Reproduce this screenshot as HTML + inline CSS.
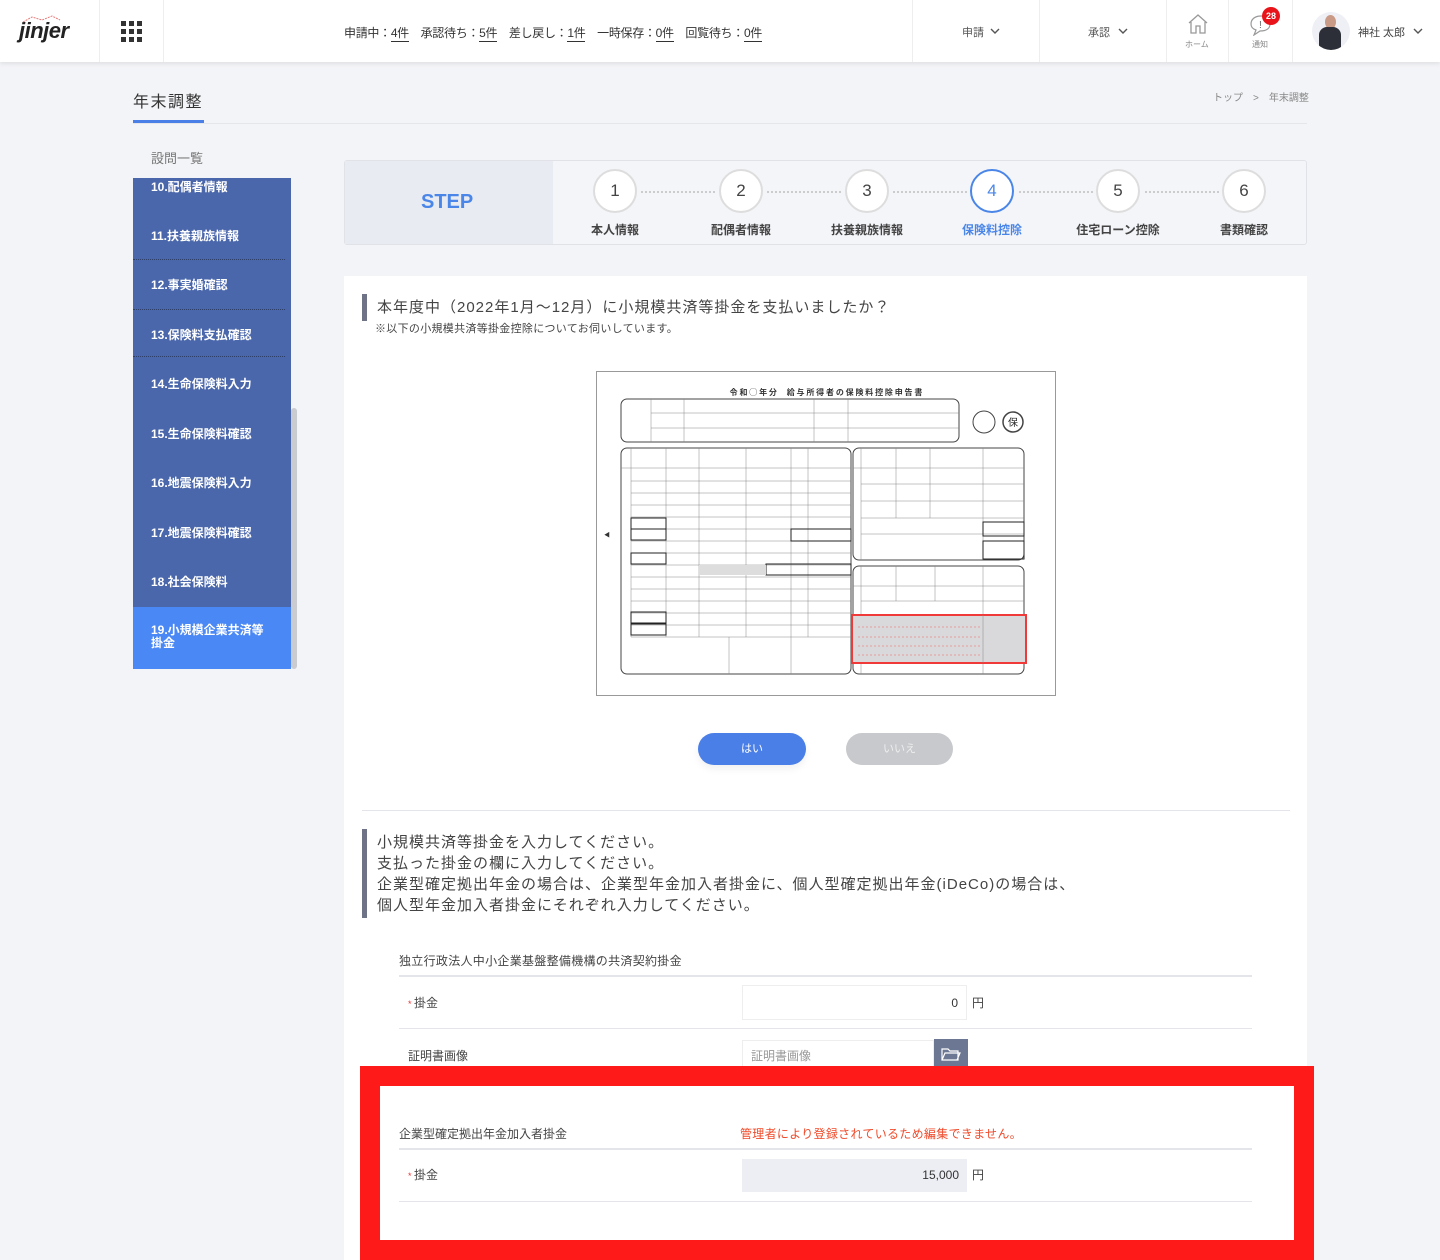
<!DOCTYPE html>
<html><head><meta charset="utf-8">
<style>
*{box-sizing:border-box;margin:0;padding:0}
html,body{width:1440px;height:1260px;overflow:hidden}
body{background:#f3f4f7;font-family:"Liberation Sans","Noto Sans CJK JP",sans-serif;color:#333;position:relative}
.abs{position:absolute}
.hdr{left:0;top:0;width:1440px;height:62px;background:#fff;box-shadow:0 2px 4px rgba(0,0,0,.08)}
.vs{position:absolute;top:0;width:1px;height:62px;background:#eee}
.cnt{font-size:12px;color:#333;top:24px;white-space:nowrap;letter-spacing:-0.3px}
.cnt u{text-decoration:none;border-bottom:1px solid #333;padding-bottom:1px}
.menu{font-size:11px;color:#555;top:24px}
.side{left:133px;top:178px;width:158px;height:491px;background:#4a67ab}
.si{position:absolute;left:0;width:158px;color:#fff;font-size:12px;font-weight:bold;padding-left:18px}
.dot{position:absolute;left:0;width:152px;border-top:1px dotted #2e3f6a}
.card{left:344px;top:276px;width:963px;height:984px;background:#fff}
.circ{position:absolute;top:169px;width:44px;height:44px;border-radius:50%;background:#fff;border:2px solid #ddd;text-align:center;line-height:40px;font-size:17px;color:#444}
.sl{position:absolute;top:221px;font-size:12px;font-weight:bold;color:#444;width:110px;text-align:center}
.dots{position:absolute;top:191px;height:0;border-top:2px dotted #ccc}
.q{font-size:15px;color:#444;letter-spacing:1px}
.hl{height:1px;background:#e3e5ea}
.lbl{font-size:12px;color:#444}
</style></head><body>
<div class="abs hdr">
  <div class="abs" style="left:19px;top:18px;font-size:22px;font-weight:bold;font-style:italic;color:#222;letter-spacing:-0.5px">jinjer</div>
  <svg class="abs" style="left:22px;top:14px" width="40" height="10"><polyline points="1,8 10,3 20,6 30,2 38,6" fill="none" stroke="#e87878" stroke-width="1" stroke-dasharray="2,1"/></svg>
  <div class="vs" style="left:99px"></div>
  <svg class="abs" style="left:121px;top:21px" width="22" height="22"><g fill="#333"><rect x="0" y="0" width="5" height="5"/><rect x="8" y="0" width="5" height="5"/><rect x="16" y="0" width="5" height="5"/><rect x="0" y="8" width="5" height="5"/><rect x="8" y="8" width="5" height="5"/><rect x="16" y="8" width="5" height="5"/><rect x="0" y="16" width="5" height="5"/><rect x="8" y="16" width="5" height="5"/><rect x="16" y="16" width="5" height="5"/></g></svg>
  <div class="vs" style="left:163px"></div>
  <div class="abs cnt" style="left:344px">申請中：<u>4件</u>　承認待ち：<u>5件</u>　差し戻し：<u>1件</u>　一時保存：<u>0件</u>　回覧待ち：<u>0件</u></div>
  <div class="vs" style="left:912px"></div>
  <div class="abs menu" style="left:962px">申請</div>
  <svg class="abs" style="left:990px;top:28px" width="10" height="6"><path d="M1 1 L5 5 L9 1" fill="none" stroke="#555" stroke-width="1.4"/></svg>
  <div class="vs" style="left:1039px"></div>
  <div class="abs menu" style="left:1088px">承認</div>
  <svg class="abs" style="left:1118px;top:28px" width="10" height="6"><path d="M1 1 L5 5 L9 1" fill="none" stroke="#555" stroke-width="1.4"/></svg>
  <div class="vs" style="left:1166px"></div>
  <svg class="abs" style="left:1187px;top:13px" width="22" height="22"><path d="M2 10 L11 2 L20 10 M4 9 V20 H9 V13 H13 V20 H18 V9" fill="none" stroke="#999" stroke-width="1.3"/></svg>
  <div class="abs" style="left:1185px;top:39px;font-size:8px;color:#888">ホーム</div>
  <div class="vs" style="left:1228px"></div>
  <svg class="abs" style="left:1249px;top:14px" width="24" height="22"><path d="M12 2 C5 2 2 6 2 10 C2 13 4 15 7 16 L5 21 L11 17 C18 17 21 14 21 10 C21 6 18 2 12 2Z" fill="none" stroke="#999" stroke-width="1.2"/><text x="10" y="14" font-size="10" fill="#666" font-family="Liberation Sans">!</text></svg>
  <div class="abs" style="left:1262px;top:7px;width:18px;height:18px;border-radius:50%;background:#e8141a;color:#fff;font-size:9px;font-weight:bold;text-align:center;line-height:18px">28</div>
  <div class="abs" style="left:1252px;top:39px;font-size:8px;color:#888">通知</div>
  <div class="vs" style="left:1292px"></div>
  <div class="abs" style="left:1312px;top:12px;width:38px;height:38px;border-radius:50%;background:#eef0f5;overflow:hidden"><div style="position:absolute;left:13px;top:3px;width:11px;height:14px;border-radius:50%;background:#c99a86"></div><div style="position:absolute;left:7px;top:15px;width:22px;height:26px;border-radius:8px 8px 0 0;background:#2c2f38"></div></div>
  <div class="abs" style="left:1358px;top:24px;font-size:11px;color:#444">神社 太郎</div>
  <svg class="abs" style="left:1413px;top:28px" width="10" height="6"><path d="M1 1 L5 5 L9 1" fill="none" stroke="#555" stroke-width="1.4"/></svg>
</div>

<div class="abs" style="left:133px;top:88px;font-size:16px;color:#333;letter-spacing:1.5px">年末調整</div>
<div class="abs" style="left:133px;top:120px;width:71px;height:3px;background:#4a7fe8"></div>
<div class="abs" style="left:133px;top:123px;width:1174px;height:1px;background:#e4e6ea"></div>
<div class="abs" style="left:1213px;top:89px;font-size:10px;color:#888">トップ　&gt;　年末調整</div>

<div class="abs" style="left:151px;top:148px;font-size:13px;color:#777">設問一覧</div>
<div class="abs side">
  <div class="si" style="top:0">10.配偶者情報</div>
  <div class="si" style="top:49px">11.扶養親族情報</div>
  <div class="dot" style="top:81px"></div>
  <div class="si" style="top:98px">12.事実婚確認</div>
  <div class="dot" style="top:131px"></div>
  <div class="si" style="top:148px">13.保険料支払確認</div>
  <div class="dot" style="top:178px"></div>
  <div class="si" style="top:197px">14.生命保険料入力</div>
  <div class="si" style="top:247px">15.生命保険料確認</div>
  <div class="si" style="top:296px">16.地震保険料入力</div>
  <div class="si" style="top:346px">17.地震保険料確認</div>
  <div class="si" style="top:395px">18.社会保険料</div>
  <div style="position:absolute;left:0;top:429px;width:158px;height:62px;background:#4a88f5"></div>
  <div class="si" style="top:446px;line-height:13px">19.小規模企業共済等<br>掛金</div>
</div>
<div class="abs" style="left:291px;top:408px;width:6px;height:261px;background:#c9cbd1;border-radius:3px"></div>

<div class="abs" style="left:344px;top:160px;width:963px;height:85px;background:#f4f5f9;border:1px solid #e0e2e8;border-radius:3px"></div>
<div class="abs" style="left:345px;top:161px;width:208px;height:83px;background:#e9ebf2"></div>
<div class="abs" style="left:421px;top:191px;font-size:20px;font-weight:bold;color:#4a86e8">STEP</div>
<div class="dots" style="left:641px;width:74px"></div>
<div class="dots" style="left:767px;width:74px"></div>
<div class="dots" style="left:893px;width:74px"></div>
<div class="dots" style="left:1019px;width:74px"></div>
<div class="dots" style="left:1145px;width:74px"></div>
<div class="circ" style="left:593px">1</div>
<div class="circ" style="left:719px">2</div>
<div class="circ" style="left:845px">3</div>
<div class="circ" style="left:970px;border-color:#4a86e8;color:#4a86e8">4</div>
<div class="circ" style="left:1096px">5</div>
<div class="circ" style="left:1222px">6</div>
<div class="sl" style="left:560px">本人情報</div>
<div class="sl" style="left:686px">配偶者情報</div>
<div class="sl" style="left:812px">扶養親族情報</div>
<div class="sl" style="left:937px;color:#4a86e8">保険料控除</div>
<div class="sl" style="left:1063px">住宅ローン控除</div>
<div class="sl" style="left:1189px">書類確認</div>

<div class="abs card"></div>
<div class="abs" style="left:362px;top:294px;width:5px;height:27px;background:#6e7486"></div>
<div class="abs q" style="left:377px;top:296px">本年度中（2022年1月～12月）に小規模共済等掛金を支払いましたか？</div>
<div class="abs" style="left:375px;top:320px;font-size:11px;color:#444;letter-spacing:0.3px">※以下の小規模共済等掛金控除についてお伺いしています。</div>

<svg class="abs" style="left:596px;top:371px" width="461" height="326" viewBox="0 0 461 326">
<rect x="0.5" y="0.5" width="459" height="324" fill="#fff" stroke="#999"/>
<text x="230" y="24" font-size="8" text-anchor="middle" fill="#333" font-weight="bold" font-family="Noto Sans CJK JP">令 和 ◯ 年 分　 給 与 所 得 者 の 保 険 料 控 除 申 告 書</text>
<g fill="none" stroke="#444" stroke-width="1">
<rect x="25" y="28" width="338" height="43" rx="6"/>
<rect x="25" y="77" width="230" height="226" rx="6"/>
<rect x="257" y="77" width="171" height="112" rx="6"/>
<rect x="257" y="195" width="171" height="108" rx="6"/>
<circle cx="388" cy="51" r="11"/><circle cx="417" cy="51" r="10" stroke-width="1.5"/>
</g>
<text x="417" y="55" font-size="10" text-anchor="middle" fill="#222" font-family="Noto Sans CJK JP">保</text>
<g stroke="#888" stroke-width="0.5">
<line x1="55" y1="28" x2="55" y2="71"/><line x1="88" y1="28" x2="88" y2="71"/><line x1="218" y1="28" x2="218" y2="71"/><line x1="252" y1="28" x2="252" y2="71"/>
<line x1="55" y1="42" x2="363" y2="42"/><line x1="55" y1="57" x2="363" y2="57"/>
<line x1="25" y1="97" x2="255" y2="97"/><line x1="35" y1="110" x2="255" y2="110"/><line x1="35" y1="122" x2="255" y2="122"/><line x1="35" y1="134" x2="255" y2="134"/><line x1="35" y1="146" x2="255" y2="146"/><line x1="35" y1="158" x2="255" y2="158"/><line x1="35" y1="170" x2="255" y2="170"/><line x1="35" y1="182" x2="255" y2="182"/><line x1="35" y1="194" x2="255" y2="194"/><line x1="35" y1="206" x2="255" y2="206"/><line x1="35" y1="218" x2="255" y2="218"/><line x1="35" y1="230" x2="255" y2="230"/><line x1="35" y1="242" x2="255" y2="242"/><line x1="35" y1="254" x2="255" y2="254"/><line x1="35" y1="266" x2="255" y2="266"/>
<line x1="35" y1="77" x2="35" y2="266"/><line x1="70" y1="77" x2="70" y2="266"/><line x1="103" y1="77" x2="103" y2="266"/><line x1="150" y1="77" x2="150" y2="266"/><line x1="195" y1="77" x2="195" y2="266"/><line x1="212" y1="77" x2="212" y2="266"/>
<line x1="133" y1="266" x2="133" y2="303"/><line x1="195" y1="266" x2="195" y2="303"/>
<line x1="257" y1="97" x2="428" y2="97"/><line x1="265" y1="113" x2="428" y2="113"/><line x1="265" y1="130" x2="428" y2="130"/><line x1="265" y1="147" x2="428" y2="147"/><line x1="265" y1="163" x2="428" y2="163"/>
<line x1="265" y1="77" x2="265" y2="189"/><line x1="300" y1="77" x2="300" y2="147"/><line x1="334" y1="77" x2="334" y2="147"/><line x1="387" y1="77" x2="387" y2="189"/>
<line x1="257" y1="215" x2="428" y2="215"/><line x1="265" y1="230" x2="428" y2="230"/><line x1="265" y1="195" x2="265" y2="303"/><line x1="300" y1="195" x2="300" y2="230"/><line x1="339" y1="195" x2="339" y2="230"/><line x1="387" y1="195" x2="387" y2="303"/>
</g>
<g fill="none" stroke="#222" stroke-width="1"><rect x="35" y="147" width="35" height="11"/><rect x="35" y="158" width="35" height="11"/><rect x="35" y="182" width="35" height="11"/><rect x="35" y="241" width="35" height="11"/><rect x="35" y="253" width="35" height="11"/><rect x="170" y="193" width="85" height="11"/><rect x="195" y="158" width="60" height="12"/><rect x="387" y="151" width="41" height="14"/><rect x="387" y="170" width="41" height="18"/></g>
<rect x="103" y="194" width="67" height="10" fill="#ddd"/>
<rect x="256" y="244" width="174" height="48" fill="#d9d9dc" stroke="#f03a3a" stroke-width="2"/>
<g stroke="#e88" stroke-width="0.8" stroke-dasharray="2,2"><line x1="262" y1="256" x2="385" y2="256"/><line x1="262" y1="266" x2="385" y2="266"/><line x1="262" y1="275" x2="385" y2="275"/><line x1="262" y1="284" x2="385" y2="284"/></g>
<line x1="387" y1="244" x2="387" y2="292" stroke="#888" stroke-width="0.5"/>
<text x="8" y="166" font-size="6" fill="#333">◀</text>
</svg>

<div class="abs" style="left:698px;top:733px;width:108px;height:32px;border-radius:16px;background:#4a7fe8;color:#fff;font-size:11px;text-align:center;line-height:32px;box-shadow:0 4px 8px rgba(0,0,0,.06)">はい</div>
<div class="abs" style="left:846px;top:733px;width:107px;height:32px;border-radius:16px;background:#c8c9cd;color:#eee;font-size:11px;text-align:center;line-height:32px">いいえ</div>
<div class="abs hl" style="left:362px;top:810px;width:928px"></div>

<div class="abs" style="left:362px;top:829px;width:5px;height:89px;background:#6e7486"></div>
<div class="abs q" style="left:377px;top:832px;line-height:21px">小規模共済等掛金を入力してください。<br>支払った掛金の欄に入力してください。<br>企業型確定拠出年金の場合は、企業型年金加入者掛金に、個人型確定拠出年金(iDeCo)の場合は、<br>個人型年金加入者掛金にそれぞれ入力してください。</div>

<div class="abs lbl" style="left:399px;top:952px;letter-spacing:0.3px">独立行政法人中小企業基盤整備機構の共済契約掛金</div>
<div class="abs hl" style="left:399px;top:975px;width:853px;height:2px"></div>
<div class="abs lbl" style="left:408px;top:994px"><span style="color:#e33;font-size:9px">* </span>掛金</div>
<div class="abs" style="left:742px;top:985px;width:225px;height:35px;border:1px solid #eee;background:#fff;text-align:right;padding-right:8px;line-height:35px;font-size:12px">0</div>
<div class="abs lbl" style="left:972px;top:994px">円</div>
<div class="abs hl" style="left:399px;top:1028px;width:853px"></div>
<div class="abs lbl" style="left:408px;top:1047px">証明書画像</div>
<div class="abs" style="left:742px;top:1040px;width:192px;height:30px;border:1px solid #eee;font-size:12px;color:#999;padding-left:8px;line-height:30px">証明書画像</div>
<div class="abs" style="left:934px;top:1039px;width:34px;height:30px;background:#6b7793"></div>
<svg class="abs" style="left:941px;top:1046px" width="20" height="16"><path d="M1 3 H7 L9 5 H17 V14 H1 Z M1 14 L4 7 H19 L16 14" fill="none" stroke="#fff" stroke-width="1.2"/></svg>

<div class="abs" style="left:360px;top:1066px;width:954px;height:194px;background:#ff1a1a"></div>
<div class="abs" style="left:380px;top:1086px;width:914px;height:154px;background:#fff"></div>
<div class="abs lbl" style="left:399px;top:1125px">企業型確定拠出年金加入者掛金</div>
<div class="abs" style="left:740px;top:1125px;font-size:12px;color:#f04a2a;letter-spacing:0.3px">管理者により登録されているため編集できません。</div>
<div class="abs hl" style="left:399px;top:1148px;width:853px;height:2px"></div>
<div class="abs lbl" style="left:408px;top:1166px"><span style="color:#e33;font-size:9px">* </span>掛金</div>
<div class="abs" style="left:742px;top:1159px;width:225px;height:33px;background:#eceef3;text-align:right;padding-right:8px;line-height:33px;font-size:12px">15,000</div>
<div class="abs lbl" style="left:972px;top:1166px">円</div>
<div class="abs hl" style="left:399px;top:1201px;width:853px"></div>
</body></html>
